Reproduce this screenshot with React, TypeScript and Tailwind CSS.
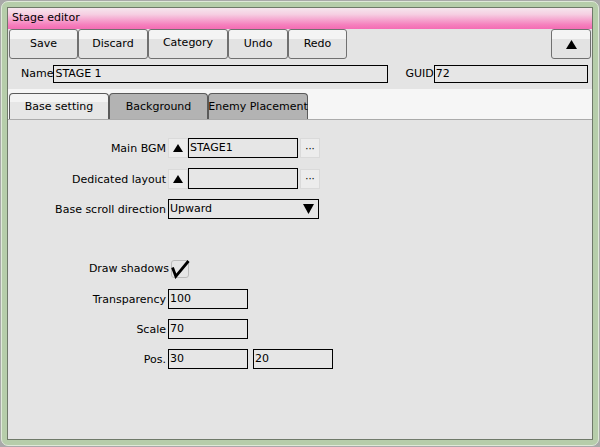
import React from "react";

const font = "font-['DejaVu_Sans',sans-serif]";

function ToolButton({ w, children }: { w: string; children: React.ReactNode }) {
  return (
    <div
      className={`${w} h-[30px] flex items-center justify-center rounded-[3px] border border-[#707070] bg-[linear-gradient(#f4f4f4_0,#f4f4f4_33%,#e3e3e3_33%,#e3e3e3_100%)] text-[11px] text-black pt-[1px]`}
    >
      {children}
    </div>
  );
}

function Up({ size = 10 }: { size?: number }) {
  return (
    <svg width={size} height={size - 2} viewBox="0 0 10 8">
      <polygon points="5,0 10,8 0,8" fill="#000" />
    </svg>
  );
}

function Down() {
  return (
    <svg width="11" height="10" viewBox="0 0 11 10">
      <polygon points="0,0 11,0 5.5,10" fill="#000" />
    </svg>
  );
}

function Label({ children }: { children: React.ReactNode }) {
  return <div className="w-[160px] pr-[2px] pt-[1px] text-right text-[11px] leading-none whitespace-nowrap">{children}</div>;
}

function Input({ w, value }: { w: string; value?: string }) {
  return (
    <div className={`${w} h-[20px] border border-black bg-[#e6e6e6] pl-[1px] flex items-center text-[11px]`}>
      {value}
    </div>
  );
}

function SmallBtn({ children }: { children: React.ReactNode }) {
  return (
    <div className="w-[20px] h-[20px] flex items-center justify-center bg-[#ececec] border border-[#dadada] text-[10px]">
      {children}
    </div>
  );
}

function Tab({ active, w, children }: { active?: boolean; w: string; children: React.ReactNode }) {
  return (
    <div
      className={`${w} h-[26px] rounded-t-[4px] border border-b-0 border-[#5a5a5a] ${
        active ? "bg-[linear-gradient(#f3f3f3_0,#f3f3f3_30%,#e6e6e6_30%)]" : "bg-[#b3b3b3]"
      } flex items-center justify-center text-[11px] whitespace-nowrap pt-[2px]`}
    >
      {children}
    </div>
  );
}

export default function App() {
  return (
    <div className={`w-[600px] h-[447px] bg-[#a9a9a9] p-[1px] ${font}`}>
      <div className="h-full rounded-[7px] border border-[#dfe9d9] bg-[#b6cdaa] p-[5px]">
        <div className="h-full border border-[#6f7969] bg-[#e4e4e4] flex flex-col">
          {/* title */}
          <div className="h-[21px] bg-[linear-gradient(#f6e6ee,#f6cfe2_30%,#f57fbd_80%,#f46cb4)] flex items-center pl-[4px] text-[11px] text-black">
            Stage editor
          </div>
          {/* toolbar */}
          <div className="flex px-[1px]">
            <ToolButton w="w-[69px]">Save</ToolButton>
            <ToolButton w="w-[70px]">Discard</ToolButton>
            <ToolButton w="w-[80px]">
              <span className="-mt-[3px]">Category</span>
            </ToolButton>
            <ToolButton w="w-[60px]">Undo</ToolButton>
            <ToolButton w="w-[59px]">Redo</ToolButton>
            <div className="ml-auto">
              <ToolButton w="w-[40px]">
                <Up size={11} />
              </ToolButton>
            </div>
          </div>
          {/* name row */}
          <div className="h-[30px] flex items-center pl-[13px] text-[11px]">
            <span>Name</span>
            <div className="w-[335px] h-[18px] border border-black bg-[#e6e6e6] pl-[1px] flex items-center">STAGE 1</div>
            <span className="ml-[17px]">GUID</span>
            <div className="w-[154px] h-[18px] border border-black bg-[#e6e6e6] pl-[1px] flex items-center">72</div>
          </div>
          {/* tabs */}
          <div className="bg-[#f6f6f6] pt-[4px] pl-[1px] flex border-b border-[#ababab] h-[31px]">
            <Tab active w="w-[100px]">Base setting</Tab>
            <Tab w="w-[99px]">Background</Tab>
            <Tab w="w-[100px]">Enemy Placement</Tab>
          </div>
          {/* content */}
          <div className="flex flex-col pt-[18px] text-[11px] gap-[10px]">
            <div className="flex items-center h-[20px]">
              <Label>Main BGM</Label>
              <SmallBtn>
                <Up />
              </SmallBtn>
              <Input w="w-[110px]" value="STAGE1" />
              <div className="w-[2px]" />
              <SmallBtn>···</SmallBtn>
            </div>
            <div className="flex items-center h-[21px]">
              <Label>Dedicated layout</Label>
              <SmallBtn>
                <Up />
              </SmallBtn>
              <div className="w-[110px] h-[21px] border border-black bg-[#e6e6e6]" />
              <div className="w-[2px]" />
              <SmallBtn>···</SmallBtn>
            </div>
            <div className="flex items-center h-[20px]">
              <Label>Base scroll direction</Label>
              <div className="w-[151px] h-[20px] border border-black bg-[#e6e6e6] pl-[1px] pr-[4px] flex items-center justify-between">
                <span>Upward</span>
                <Down />
              </div>
            </div>
            <div className="h-[20px]" />
            <div className="flex items-center h-[20px]">
              <div className="w-[162px] text-right pr-[1px] pt-[1px] whitespace-nowrap">Draw shadows</div>
              <div className="relative w-[18px] h-[18px] rounded-[3px] border border-[#bdbdbd] bg-[#e6e6e6] ml-[1px]">
                <svg className="absolute -left-[1px] -top-[1px]" width="19" height="19" viewBox="0 0 19 19">
                  <path d="M1.5 7.5 L4.8 16.3 L17.5 1" stroke="#000" strokeWidth="2.8" fill="none" strokeLinejoin="miter" />
                </svg>
              </div>
            </div>
            <div className="flex items-center h-[20px]">
              <Label>Transparency</Label>
              <Input w="w-[80px]" value="100" />
            </div>
            <div className="flex items-center h-[20px]">
              <Label>Scale</Label>
              <Input w="w-[80px]" value="70" />
            </div>
            <div className="flex items-center h-[20px]">
              <Label>Pos.</Label>
              <Input w="w-[80px]" value="30" />
              <div className="w-[5px]" />
              <Input w="w-[80px]" value="20" />
            </div>
          </div>
        </div>
      </div>
    </div>
  );
}
